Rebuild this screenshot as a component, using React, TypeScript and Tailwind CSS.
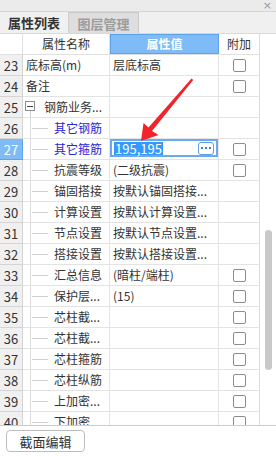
import React from 'react'

type Row = {
  no: number
  name: string
  value?: string
  check?: boolean
  level: 0 | 1 | 2
  blue?: boolean
  edit?: boolean
}

const rows: Row[] = [
  { no: 23, name: '底标高(m)', value: '层底标高', check: true, level: 0 },
  { no: 24, name: '备注', check: true, level: 0 },
  { no: 25, name: '钢筋业务...', level: 1 },
  { no: 26, name: '其它钢筋', level: 2, blue: true },
  { no: 27, name: '其它箍筋', level: 2, blue: true, edit: true, check: true },
  { no: 28, name: '抗震等级', value: '(二级抗震)', check: true, level: 2 },
  { no: 29, name: '锚固搭接', value: '按默认锚固搭接...', level: 2 },
  { no: 30, name: '计算设置', value: '按默认计算设置...', level: 2 },
  { no: 31, name: '节点设置', value: '按默认节点设置...', level: 2 },
  { no: 32, name: '搭接设置', value: '按默认搭接设置...', level: 2 },
  { no: 33, name: '汇总信息', value: '(暗柱/端柱)', check: true, level: 2 },
  { no: 34, name: '保护层...', value: '(15)', check: true, level: 2 },
  { no: 35, name: '芯柱截...', check: true, level: 2 },
  { no: 36, name: '芯柱截...', check: true, level: 2 },
  { no: 37, name: '芯柱箍筋', check: true, level: 2 },
  { no: 38, name: '芯柱纵筋', check: true, level: 2 },
  { no: 39, name: '上加密...', check: true, level: 2 },
  { no: 40, name: '下加密...', check: true, level: 2 },
]

function Checkbox() {
  return <div className="w-[13px] h-[13px] border border-[#8c8c8c] rounded-[2px] bg-white" />
}

function NameCell({ row }: { row: Row }) {
  if (row.level === 0) {
    return <span className="pl-[3px] text-[#333]">{row.name}</span>
  }
  if (row.level === 1) {
    return (
      <>
        <span className="absolute left-[2px] top-[4px] w-[10px] h-[10px] border border-[#8c8c8c] bg-white flex items-center justify-center">
          <span className="w-[6px] h-px bg-[#444]" />
        </span>
        <span className="absolute left-[7px] top-[14px] bottom-0 w-px bg-[#cfcfcf]" />
        <span className="pl-[21px] text-[#333]">{row.name}</span>
      </>
    )
  }
  return (
    <>
      <span className="absolute left-[7px] top-0 bottom-0 w-px bg-[#dcdcdc]" />
      <span className="absolute left-[9px] top-[10px] w-[16px] h-px bg-[#cfcfcf]" />
      <span className={'pl-[31px] ' + (row.blue ? 'text-[#2626d9]' : 'text-[#333]')}>{row.name}</span>
    </>
  )
}

export default function App() {
  return (
    <div
      className="relative w-[276px] h-[456px] bg-white overflow-hidden text-[12px] leading-none"
      style={{ fontFamily: '"Noto Sans CJK SC", "Noto Sans", sans-serif' }}
    >
      {/* title strip */}
      <div className="h-[12px] bg-[#ebebeb] border-b border-[#d6d6d6] flex justify-end items-center pr-[4px]">
        <span className="text-[11px] text-[#9a9a9a]" style={{ fontFamily: '"DejaVu Sans", sans-serif' }}>×</span>
      </div>

      {/* tabs */}
      <div className="h-[22px] bg-[#f0f0f0] border-b border-[#d9d9d9] flex">
        <div className="w-[69px] flex items-center justify-center font-bold text-[13px] text-[#333] bg-[#f0f0f0] border-r border-[#cfcfcf]">
          属性列表
        </div>
        <div className="w-[70px] flex items-center justify-center font-bold text-[13px] text-[#9c9c9c] bg-[#dedede] border-r border-t border-[#c9c9c9]">
          图层管理
        </div>
      </div>

      {/* grid */}
      <div className="flex h-[392px] border-b border-[#cccccc]">
        <div className="w-[259px] flex flex-col">
          <div className="h-[21px] flex border-b border-[#e0e0e0] shrink-0">
            <div className="w-[23px] border-r border-[#e0e0e0]" />
            <div className="w-[87px] border-r border-[#e0e0e0] flex items-center justify-center text-[#333]">属性名称</div>
            <div className="w-[109px] bg-[#7fbbf6] border border-[#5fa2ea] flex items-center justify-center text-white font-bold">属性值</div>
            <div className="w-[40px] flex items-center justify-center text-[#333]">附加</div>
          </div>
          <div className="flex-1 overflow-hidden">
            {rows.map((row) => (
              <div key={row.no} className="h-[21px] flex">
                <div
                  className={
                    'w-[23px] shrink-0 flex items-center justify-center text-[13px] border-r border-b ' +
                    (row.edit
                      ? 'bg-[#7fbbf6] text-white border-[#5fa2ea]'
                      : 'bg-[#f0f0f0] text-[#333] border-[#d4d4d4]')
                  }
                >
                  {row.no}
                </div>
                <div className="relative w-[87px] shrink-0 flex items-center border-r border-b border-[#e3e3e3] whitespace-nowrap overflow-hidden">
                  <NameCell row={row} />
                </div>
                <div className="w-[109px] shrink-0 border-r border-b border-[#e3e3e3] flex items-center whitespace-nowrap overflow-hidden text-[#333]">
                  {row.edit ? (
                    <div className="self-start w-full h-[18px] border-2 border-[#6aaaf0] flex items-center pl-[2px] pr-[2px] bg-white">
                      <span className="bg-[#3399ff] text-white px-[1px] h-[13px] flex items-center text-[13px]">195,195</span>
                      <span className="ml-auto w-[16px] h-[13px] border border-[#5ea0e8] rounded-[3px] flex items-center justify-center gap-[2px]">
                        <span className="w-[2px] h-[2px] bg-[#3b82d6]" />
                        <span className="w-[2px] h-[2px] bg-[#3b82d6]" />
                        <span className="w-[2px] h-[2px] bg-[#3b82d6]" />
                      </span>
                    </div>
                  ) : (
                    <span className="pl-[3px]">{row.value}</span>
                  )}
                </div>
                <div className="w-[40px] shrink-0 border-b border-[#e3e3e3] flex items-center justify-center">
                  {row.check && <Checkbox />}
                </div>
              </div>
            ))}
          </div>
        </div>
        <div className="w-[17px] border-l border-[#dcdcdc] bg-white flex flex-col pt-[196px] items-center">
          <div className="w-[7px] h-[140px] rounded-full bg-[#c9c9c9]" />
        </div>
      </div>

      {/* footer */}
      <div className="pl-[6px] pt-[4px]">
        <button className="w-[79px] h-[22px] border border-[#bdbdbd] rounded-[4px] bg-white text-[13px] text-[#333] flex items-center justify-center">
          截面编辑
        </button>
      </div>

      {/* annotation arrow */}
      <svg className="absolute inset-0 pointer-events-none" width="276" height="456" viewBox="0 0 276 456">
        <polygon
          points="141,141 143.5,123 148.5,127.5 191.5,78.5 193.2,80 152,131 158.5,135"
          fill="#f2242b"
        />
      </svg>
    </div>
  )
}
